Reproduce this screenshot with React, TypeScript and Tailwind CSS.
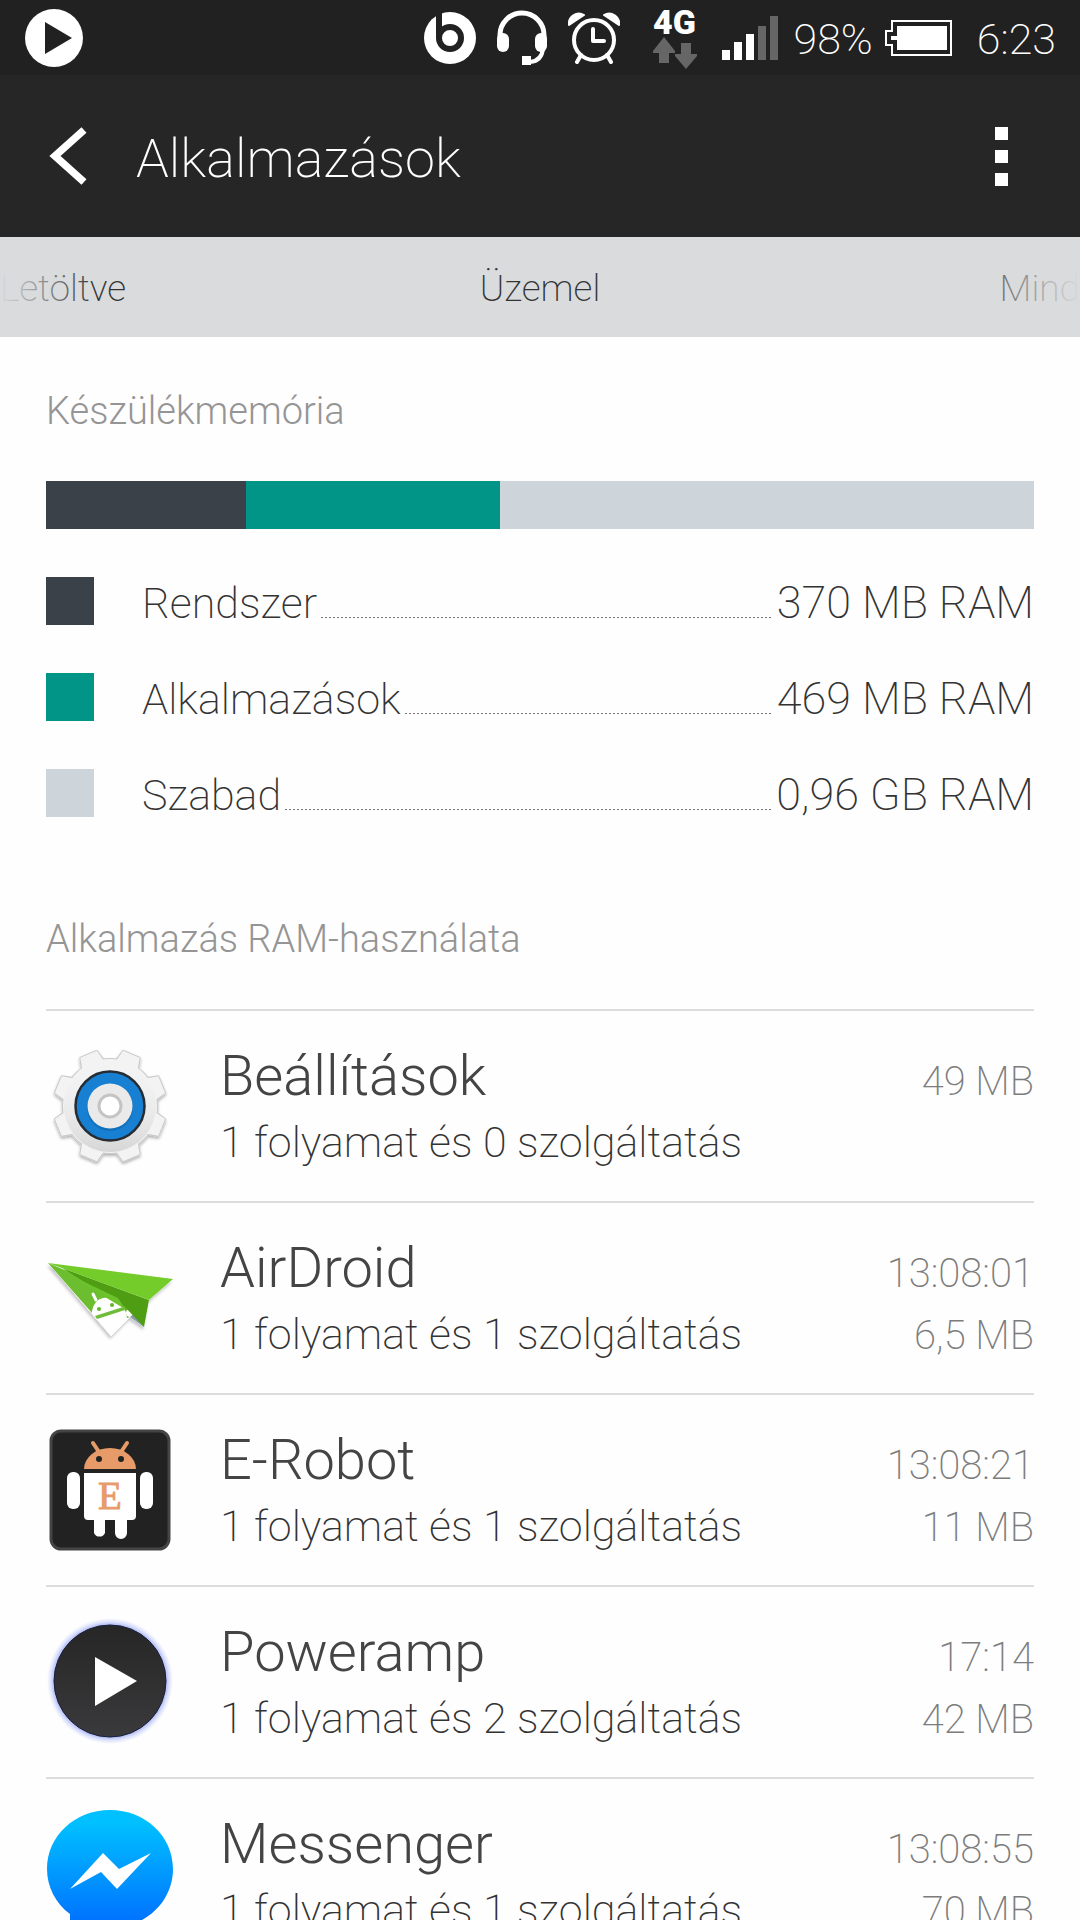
import type { ReactNode } from "react";

interface MemoryPart {
  label: string;
  value: string;
  share: number;
  color: string;
}

interface RunningApp {
  name: string;
  detail: string;
  time?: string;
  size: string;
  icon: ReactNode;
}

const MEMORY: MemoryPart[] = [
  { label: "Rendszer", value: "370 MB RAM", share: 200, color: "bg-[#3a4149]" },
  { label: "Alkalmazások", value: "469 MB RAM", share: 254, color: "bg-[#009587]" },
  { label: "Szabad", value: "0,96 GB RAM", share: 534, color: "bg-[#cdd5db]" },
];

const APPS: RunningApp[] = [
  { name: "Beállítások", detail: "1 folyamat és 0 szolgáltatás", size: "49 MB", icon: <GearIcon /> },
  { name: "AirDroid", detail: "1 folyamat és 1 szolgáltatás", time: "13:08:01", size: "6,5 MB", icon: <AirDroidIcon /> },
  { name: "E-Robot", detail: "1 folyamat és 1 szolgáltatás", time: "13:08:21", size: "11 MB", icon: <ERobotIcon /> },
  { name: "Poweramp", detail: "1 folyamat és 2 szolgáltatás", time: "17:14", size: "42 MB", icon: <PowerampIcon /> },
  { name: "Messenger", detail: "1 folyamat és 1 szolgáltatás", time: "13:08:55", size: "70 MB", icon: <MessengerIcon /> },
];

function GearIcon() {
  const teeth = [22.5, 67.5, 112.5, 157.5, 202.5, 247.5, 292.5, 337.5];
  return (
    <svg viewBox="0 0 128 128" className="size-32">
      <defs>
        <filter id="gearShadow" x="-20%" y="-20%" width="140%" height="140%">
          <feDropShadow dx="0" dy="2" stdDeviation="1.5" floodColor="#000" floodOpacity="0.3" />
        </filter>
        <linearGradient id="gearShade" x1="0" y1="0" x2="0" y2="1">
          <stop offset="0" stopColor="#fff" stopOpacity="0" />
          <stop offset="1" stopColor="#000" stopOpacity="0.12" />
        </linearGradient>
      </defs>
      <g filter="url(#gearShadow)">
        <g fill="#c9c9c9">
          <circle cx="64" cy="64" r="48" />
          {teeth.map((a) => (
            <path key={a} d="M50 24 L54 8 Q54 7 56 7 L72 7 Q74 7 74 8 L78 24 Z" transform={`rotate(${a} 64 64)`} />
          ))}
        </g>
        <g fill="#f3f3f3">
          <circle cx="64" cy="64" r="47" />
          {teeth.map((a) => (
            <path key={a} d="M51 26 L55 8 L73 8 L77 26 Z" transform={`rotate(${a} 64 64)`} />
          ))}
        </g>
      </g>
      <circle cx="64" cy="64" r="46" fill="url(#gearShade)" />
      <circle cx="64" cy="64" r="34.5" fill="#1780d2" stroke="#262c33" strokeWidth="2.5" />
      <circle cx="64" cy="66" r="23" fill="#0b5fa3" opacity="0.5" />
      <circle cx="64" cy="64" r="22.5" fill="#eaeaea" />
      <circle cx="64" cy="64" r="11" fill="#fff" stroke="#c4c4c4" strokeWidth="3" />
    </svg>
  );
}

function AirDroidIcon() {
  return (
    <svg viewBox="0 0 128 128" className="size-32">
      <defs>
        <filter id="planeShadow" x="-20%" y="-20%" width="140%" height="140%">
          <feDropShadow dx="-1" dy="3" stdDeviation="1.5" floodColor="#000" floodOpacity="0.22" />
        </filter>
      </defs>
      <g filter="url(#planeShadow)">
        <path d="M2 29 L65 102 L84 83 L98 93 L103 66 L127 45 Z" fill="#fff" />
      </g>
      <path d="M2 29 L46 79 L86 80 L90 66 Z" fill="#6cbd30" />
      {/* white android peeking out of the fold */}
      <path d="M46 77 Q48 66 57 64 Q68 61 77 74 L84 83 L65 102 L46 79 Z" fill="#fff" />
      <path d="M50 66 L47 60" stroke="#fff" strokeWidth="3" strokeLinecap="round" />
      <path d="M49 82 L77 73 L79 76 L51 85 Z" fill="#6fbc38" />
      <circle cx="53" cy="75" r="2" fill="#62b52a" />
      <circle cx="66" cy="71" r="2" fill="#62b52a" />
      <path d="M79 74 L81 84 L84 83 L86 76 Z" fill="#62b52a" />
      <circle cx="84" cy="79" r="4" fill="#fff" />
      <path d="M84 83 L98 93 L90 78 Z" fill="#8c98a8" />
      <path d="M16 34 L79 73 L98 93 L103 66 Z" fill="#4f9d12" />
      <path d="M2 29 L30 44 L72 64 L79 75 Z" fill="#6cc22b" />
      <path d="M2 29 L127 45 L103 66 Z" fill="#74cc2a" />
    </svg>
  );
}

function ERobotIcon() {
  return (
    <svg viewBox="0 0 128 128" className="size-32">
      <rect x="5" y="5" width="118" height="118" rx="10" fill="#222" stroke="#444" strokeWidth="3" />
      <g fill="#e79b69">
        <path d="M38 43 A26 21 0 0 1 90 43 Z" />
        <path d="M47 17 L53 26 M81 17 L75 26" stroke="#e79b69" strokeWidth="4" strokeLinecap="round" />
      </g>
      <circle cx="53" cy="33" r="3" fill="#222" />
      <circle cx="75" cy="33" r="3" fill="#222" />
      <g fill="#fff">
        <path d="M38 47 H90 V90 Q90 94 86 94 H81 V107 A6 6 0 0 1 69 107 V94 H59 V107 A6 6 0 0 1 48 107 V94 H42 Q38 94 38 90 Z" />
        <rect x="21" y="46" width="13" height="37" rx="6" />
        <rect x="94" y="46" width="13" height="37" rx="6" />
      </g>
      <text x="64" y="83" textAnchor="middle" fontFamily="'Liberation Serif', serif" fontSize="39" fill="#e79b69" stroke="#e79b69">E</text>
    </svg>
  );
}

function PowerampIcon() {
  return (
    <svg viewBox="0 0 128 128" className="size-32">
      <defs>
        <linearGradient id="amp" x1="0" y1="0" x2="0" y2="1">
          <stop offset="0" stopColor="#262626" />
          <stop offset="1" stopColor="#3a3a3c" />
        </linearGradient>
        <radialGradient id="ampGlow">
          <stop offset="0.88" stopColor="#8fa0f5" stopOpacity="0.8" />
          <stop offset="0.94" stopColor="#8fa0f5" stopOpacity="0.3" />
          <stop offset="1" stopColor="#8fa0f5" stopOpacity="0" />
        </radialGradient>
      </defs>
      <circle cx="64" cy="63" r="63" fill="url(#ampGlow)" />
      <circle cx="64" cy="63" r="56" fill="url(#amp)" stroke="#1b2038" />
      <path d="M49 39 L91 63 L49 88 Z" fill="#fff" />
    </svg>
  );
}

function MessengerIcon() {
  return (
    <svg viewBox="0 0 128 128" className="size-32">
      <defs>
        <linearGradient id="msg" x1="0" y1="0" x2="0" y2="1">
          <stop offset="0.1" stopColor="#00c0ff" />
          <stop offset="0.9" stopColor="#0070ff" />
        </linearGradient>
      </defs>
      <path d="M64 0 C99 0 127 26 127 59 C127 92 99 118 64 118 C58 118 52 117 46 116 L24 128 V104 C10 94 1 77 1 59 C1 26 29 0 64 0 Z" fill="url(#msg)" />
      <path d="M24 79 L57 43 L73 59 L105 43 L71 79 L55 62 Z" fill="#fff" />
    </svg>
  );
}

function StatusBar() {
  return (
    <div className="flex h-[75px] shrink-0 items-center justify-between bg-[#212121] px-6 text-white">
      <svg viewBox="0 0 60 60" className="size-[60px]">
        <circle cx="30" cy="30" r="29" fill="#fff" />
        <path d="M21 14 L48 30 L21 46 Z" fill="#212121" />
      </svg>
      <div className="flex items-center">
        {/* beats audio */}
        <svg viewBox="0 0 52 52" className="mr-5 size-[52px]">
          <circle cx="26" cy="26" r="26" fill="#fff" />
          <circle cx="26" cy="26" r="11" fill="none" stroke="#212121" strokeWidth="6" />
          <path d="M12 0 H18 V26 H12 Z" fill="#212121" />
        </svg>
        {/* headset */}
        <svg viewBox="0 0 52 56" className="mr-5 h-14 w-[52px]">
          <path d="M4 32 V25 A22 22 0 0 1 48 25 V32" fill="none" stroke="#fff" strokeWidth="5" />
          <rect x="1" y="23" width="12" height="19" rx="6" fill="#fff" />
          <rect x="39" y="23" width="12" height="19" rx="6" fill="#fff" />
          <path d="M47 38 Q46 51 34 52" fill="none" stroke="#fff" strokeWidth="4" />
          <path d="M26 46 H35 V55 H26 Z" fill="#fff" />
        </svg>
        {/* alarm */}
        <svg viewBox="0 0 52 52" className="mr-8 size-[52px]">
          <circle cx="26" cy="28" r="20" fill="none" stroke="#fff" strokeWidth="4" />
          <path d="M1 13 A10 10 0 0 1 16 3 Z" fill="#fff" stroke="#fff" strokeWidth="2" strokeLinejoin="round" />
          <path d="M51 13 A10 10 0 0 0 36 3 Z" fill="#fff" stroke="#fff" strokeWidth="2" strokeLinejoin="round" />
          <path d="M13 43 L9 50 M39 43 L43 50" stroke="#fff" strokeWidth="4" strokeLinecap="round" />
          <path d="M25 17 V29 H36" fill="none" stroke="#fff" strokeWidth="4" strokeLinecap="round" strokeLinejoin="round" />
        </svg>
        <div className="mr-6 flex flex-col items-center">
          <span className="text-[34px] leading-[30px] font-black">4G</span>
          <svg viewBox="0 0 46 32" className="h-8 w-[46px]" fill="#666">
            <path d="M12 0 L23 14 V16 H17 V26 H7 V16 H1 V14 Z" />
            <path d="M34 32 L45 19 V17 H39 V6 H29 V17 H23 V19 Z" />
          </svg>
        </div>
        <svg viewBox="0 0 56 44" className="mr-4 h-11 w-14">
          <path d="M0 34 H8 V44 H0 Z M12 26 H20 V44 H12 Z M24 18 H32 V44 H24 Z" fill="#fff" />
          <path d="M36 10 H44 V44 H36 Z M48 0 H56 V44 H48 Z" fill="#666" />
        </svg>
        <span className="mr-3 pt-1 text-[43px] font-extralight">98%</span>
        <svg viewBox="0 0 68 36" className="mr-6 h-9 w-[68px]">
          <path d="M7 1 H66 V35 H7 V25 H1 V11 H7 Z" fill="none" stroke="#fff" strokeWidth="2" />
          <path d="M12 6 H62 V30 H12 V20 H6 V16 H12 Z" fill="#fff" />
        </svg>
        <span className="pt-1 text-[43px] font-extralight">6:23</span>
      </div>
    </div>
  );
}

function Header() {
  return (
    <header className="flex h-[162px] shrink-0 items-center bg-[#262626] px-12 text-white">
      <button type="button" aria-label="Vissza">
        <svg viewBox="0 0 40 58" className="h-[58px] w-10">
          <path d="M36 3 L7 29 L36 55" fill="none" stroke="#fff" strokeWidth="7.5" />
        </svg>
      </button>
      <h1 className="ml-12 pt-1 text-[54px] font-extralight">Alkalmazások</h1>
      <button type="button" aria-label="Menü" className="ml-auto px-6 pt-px">
        <svg viewBox="0 0 13 60" className="h-[60px] w-[13px]" fill="#fff">
          <path d="M0 0 H13 V13 H0 Z M0 23 H13 V36 H0 Z M0 46 H13 V59 H0 Z" />
        </svg>
      </button>
    </header>
  );
}

function Tabs() {
  return (
    <nav className="relative grid h-[100px] shrink-0 grid-cols-3 items-center bg-[#d9dbdd] pt-1 text-[37px] font-extralight text-[#333]">
      <button type="button" className="justify-self-start">Letöltve</button>
      <button type="button" className="justify-self-center">Üzemel</button>
      <button type="button" className="justify-self-end">Mind</button>
      <div className="pointer-events-none absolute inset-y-0 left-0 w-24 bg-linear-to-r from-[#d9dbdd] to-[#d9dbdd]/0" />
      <div className="pointer-events-none absolute inset-y-0 right-0 w-32 bg-linear-to-l from-[#d9dbdd] to-[#d9dbdd]/0" />
    </nav>
  );
}

function MemorySection() {
  return (
    <section>
      <h2 className="pt-[46px] text-[38px] leading-[56px] font-light text-[#959595]">Készülékmemória</h2>
      <div className="mt-[42px] flex h-12">
        {MEMORY.map((m) => (
          <div key={m.label} className={m.color} style={{ flexGrow: m.share }} />
        ))}
      </div>
      <dl>
        {MEMORY.map((m) => (
          <div key={m.label} className="mt-12 flex h-12 items-center font-extralight text-[#333]">
            <span className={`mr-12 size-12 shrink-0 ${m.color}`} />
            <div className="flex flex-1 items-baseline pt-1">
              <dt className="text-[43px]">{m.label}</dt>
              <span className="mx-1 h-px flex-1 bg-[repeating-linear-gradient(to_right,#777_0_2px,transparent_2px_4px)]" />
              <dd className="text-[45px]">{m.value}</dd>
            </div>
          </div>
        ))}
      </dl>
    </section>
  );
}

function AppRow({ app }: { app: RunningApp }) {
  return (
    <li className="border-t-2 border-[#dcdcdc]">
      <button type="button" className="flex h-[190px] w-full items-center text-left">
        <span className="shrink-0">{app.icon}</span>
        <span className="ml-[46px] grid flex-1 grid-cols-[1fr_auto] items-baseline pt-1 text-[#7c7c7c]">
          <span className="text-[56px] leading-[66px] font-light text-[#444]">{app.name}</span>
          <span className="text-right text-[40px] leading-[56px] font-extralight">{app.time ?? app.size}</span>
          <span className="text-[43px] leading-[64px] font-extralight text-[#333]">{app.detail}</span>
          {app.time && <span className="text-right text-[40px] leading-[56px] font-extralight">{app.size}</span>}
        </span>
      </button>
    </li>
  );
}

export default function App() {
  return (
    <div className="flex h-screen flex-col bg-[#fefefe] font-['Roboto','Liberation_Sans',sans-serif]">
      <StatusBar />
      <Header />
      <Tabs />
      <main className="flex-1 overflow-y-auto px-[46px] [scrollbar-width:none]">
        <MemorySection />
        <section>
          <h2 className="mt-[94px] text-[38px] leading-[56px] font-light text-[#959595]">Alkalmazás RAM-használata</h2>
          <ul className="mt-[42px]">
            {APPS.map((app) => (
              <AppRow key={app.name} app={app} />
            ))}
          </ul>
        </section>
      </main>
    </div>
  );
}
